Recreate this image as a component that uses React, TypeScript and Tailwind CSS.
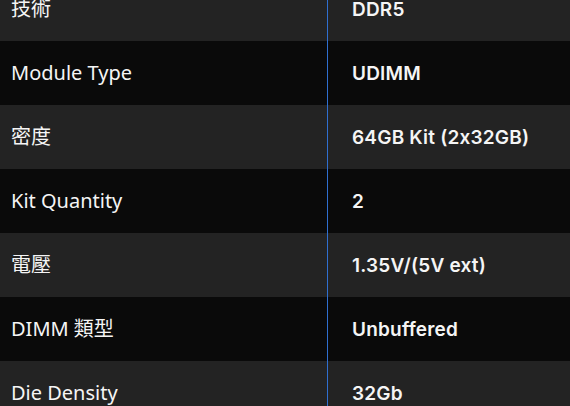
import React from "react";

const rows: [string, string][] = [
  ["技術", "DDR5"],
  ["Module Type", "UDIMM"],
  ["密度", "64GB Kit (2x32GB)"],
  ["Kit Quantity", "2"],
  ["電壓", "1.35V/(5V ext)"],
  ["DIMM 類型", "Unbuffered"],
  ["Die Density", "32Gb"],
];

export default function App() {
  return (
    <div className="w-[570px] h-[406px] overflow-hidden bg-[#0a0a0a]">
      <div className="mt-[-23px] flex flex-col">
        {rows.map(([k, v], i) => (
          <div
            key={i}
            className={`flex h-[64px] ${i % 2 === 0 ? "bg-[#232323]" : "bg-[#0a0a0a]"}`}
          >
            <div className="w-[327px] flex items-center pl-[11px] text-[20px] text-[#f5f5f5] font-['Noto_Sans','Noto_Sans_CJK_TC',sans-serif]">
              {k}
            </div>
            <div className="w-px bg-[#2f6fd0]" />
            <div className="flex-1 flex items-center pl-[24px] pt-[2px] text-[19px] font-semibold tracking-[0.2px] text-[#f5f5f5] font-['Inter',sans-serif] [font-feature-settings:'calt'_0]">
              {v}
            </div>
          </div>
        ))}
      </div>
    </div>
  );
}
